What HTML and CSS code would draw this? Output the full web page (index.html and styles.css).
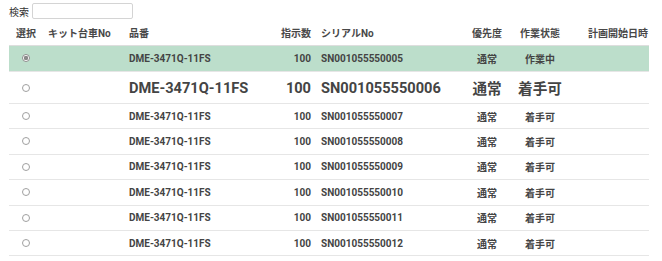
FILE: index.html
```html
<!DOCTYPE html>
<html lang="ja">
<head>
<meta charset="utf-8">
<link rel="stylesheet" href="styles.css">
</head>
<body>
<div class="page">
  <div class="search">
    <label class="search-label">検索</label>
    <input class="search-input" type="text">
  </div>
  <table class="grid">
    <colgroup>
      <col class="c-sel"><col class="c-kit"><col class="c-part"><col class="c-qty"><col class="c-serial"><col class="c-prio"><col class="c-state"><col class="c-date">
    </colgroup>
    <thead>
      <tr>
        <th class="sel">選択</th><th>キット台車No</th><th>品番</th><th class="qty">指示数</th><th>シリアルNo</th><th class="ctr">優先度</th><th class="ctr">作業状態</th><th class="date">計画開始日時</th>
      </tr>
    </thead>
    <tbody>
      <tr class="selected">
        <td class="sel"><span class="radio on"></span></td><td></td><td>DME-3471Q-11FS</td><td class="qty">100</td><td>SN001055550005</td><td class="ctr">通常</td><td class="ctr">作業中</td><td></td>
      </tr>
      <tr class="big">
        <td class="sel"><span class="radio"></span></td><td></td><td>DME-3471Q-11FS</td><td class="qty">100</td><td>SN001055550006</td><td class="ctr">通常</td><td class="ctr">着手可</td><td></td>
      </tr>
      <tr>
        <td class="sel"><span class="radio"></span></td><td></td><td>DME-3471Q-11FS</td><td class="qty">100</td><td>SN001055550007</td><td class="ctr">通常</td><td class="ctr">着手可</td><td></td>
      </tr>
      <tr>
        <td class="sel"><span class="radio"></span></td><td></td><td>DME-3471Q-11FS</td><td class="qty">100</td><td>SN001055550008</td><td class="ctr">通常</td><td class="ctr">着手可</td><td></td>
      </tr>
      <tr>
        <td class="sel"><span class="radio"></span></td><td></td><td>DME-3471Q-11FS</td><td class="qty">100</td><td>SN001055550009</td><td class="ctr">通常</td><td class="ctr">着手可</td><td></td>
      </tr>
      <tr>
        <td class="sel"><span class="radio"></span></td><td></td><td>DME-3471Q-11FS</td><td class="qty">100</td><td>SN001055550010</td><td class="ctr">通常</td><td class="ctr">着手可</td><td></td>
      </tr>
      <tr>
        <td class="sel"><span class="radio"></span></td><td></td><td>DME-3471Q-11FS</td><td class="qty">100</td><td>SN001055550011</td><td class="ctr">通常</td><td class="ctr">着手可</td><td></td>
      </tr>
      <tr>
        <td class="sel"><span class="radio"></span></td><td></td><td>DME-3471Q-11FS</td><td class="qty">100</td><td>SN001055550012</td><td class="ctr">通常</td><td class="ctr">着手可</td><td></td>
      </tr>
    </tbody>
  </table>
</div>
</body>
</html>
```
FILE: styles.css
```css
html, body {
  margin: 0;
  padding: 0;
  background: #fff;
}
body {
  font-family: Roboto, "Noto Sans CJK JP", sans-serif;
  color: #333;
}
.page {
  padding: 3px 0 0 9px;
}
.search {
  display: flex;
  align-items: center;
  gap: 1px;
  height: 16px;
}
.search-label {
  font-size: 10px;
  color: #333;
  width: 22px;
}
.search-input {
  box-sizing: border-box;
  width: 101px;
  height: 16px;
  margin: 0;
  padding: 0 3px;
  border: 1px solid #d4d4d4;
  border-radius: 2px;
  background: #fff;
  outline: none;
}
.grid {
  margin-top: 1px;
  width: 640px;
  table-layout: fixed;
  border-collapse: collapse;
  font-size: 10px;
  font-weight: bold;
}
.c-sel { width: 34px; }
.c-kit { width: 81px; }
.c-part { width: 142px; }
.c-qty { width: 50px; }
.c-serial { width: 150px; }
.c-prio { width: 42px; }
.c-state { width: 64px; }
.c-date { width: 77px; }

.grid th {
  height: 25px;
  padding: 0 5px;
  text-align: left;
  color: #484848;
  font-weight: bold;
  white-space: nowrap;
  border-bottom: 1px solid #dedede;
}
.grid td {
  height: 24.4px;
  padding: 0 5px;
  white-space: nowrap;
  color: #444;
  border-bottom: 1px solid #e6e6e6;
}
.grid .sel { text-align: center; padding: 0; }
.grid .qty { text-align: right; }
.grid .ctr { text-align: center; padding: 0; }
.grid th.date { padding-left: 16px; }

.grid tr.selected td {
  background: #bcdecb;
  height: 25px;
}
.grid tr.big td {
  font-size: 14.6px;
  height: 31px;
}

.radio {
  display: inline-block;
  box-sizing: border-box;
  width: 8px;
  height: 8px;
  border: 1px solid #a0a0a0;
  border-radius: 50%;
  background: #fff;
  vertical-align: middle;
  position: relative;
  top: -1px;
}
.radio.on {
  background: radial-gradient(circle, #8a8a8a 0 2px, #fff 2.4px);
  border-color: #8c8c8c;
}
```
